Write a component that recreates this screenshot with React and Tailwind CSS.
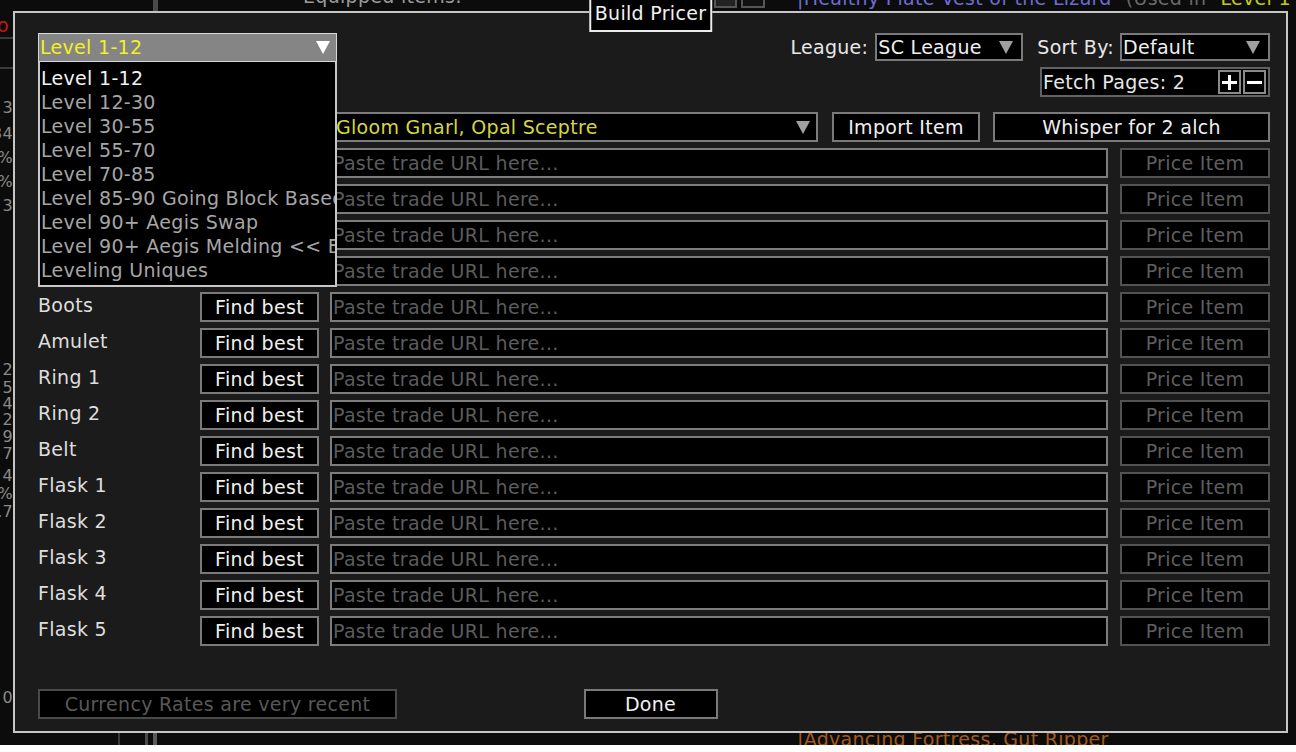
import React from "react";

const SLOTS = [
  "Weapon 1",
  "Weapon 2",
  "Helmet",
  "Body Armour",
  "Gloves",
  "Boots",
  "Amulet",
  "Ring 1",
  "Ring 2",
  "Belt",
  "Flask 1",
  "Flask 2",
  "Flask 3",
  "Flask 4",
  "Flask 5",
];

const LEVELS = [
  "Level 1-12",
  "Level 12-30",
  "Level 30-55",
  "Level 55-70",
  "Level 70-85",
  "Level 85-90 Going Block Based",
  "Level 90+ Aegis Swap",
  "Level 90+ Aegis Melding << EX",
  "Leveling Uniques",
];

// bits of the main window peeking out from behind the dialog
const EDGE_NUMBERS = [
  { y: 100, t: "3" },
  { y: 126, t: "34" },
  { y: 150, t: "3%" },
  { y: 174, t: "%" },
  { y: 198, t: "3" },
  { y: 362, t: "2" },
  { y: 380, t: "5" },
  { y: 396, t: "4" },
  { y: 412, t: "2" },
  { y: 429, t: "9" },
  { y: 446, t: "7" },
  { y: 468, t: "4" },
  { y: 486, t: "%" },
  { y: 504, t: ".7" },
  { y: 690, t: "0" },
];

function Arrow({ color = "#a0a0a0" }) {
  return (
    <svg width="14" height="13" viewBox="0 0 14 13" className="shrink-0">
      <polygon points="0,0 14,0 7,13" fill={color} />
    </svg>
  );
}

function Button({ children, className = "", dim = false }) {
  return (
    <div
      className={`flex h-[30px] shrink-0 items-center justify-center border-2 bg-black leading-none ${
        dim ? "border-[#525252] text-[#5e5e5e]" : "border-[#7a7a7a] text-[#f0f0f0]"
      } ${className}`}
    >
      {children}
    </div>
  );
}

function UrlInput() {
  return (
    <div className="ml-[11px] flex h-[30px] w-[778px] shrink-0 items-center border-2 border-[#7c7c7c] bg-black pl-[1px] leading-none text-[#5c5c5c]">
      Paste trade URL here...
    </div>
  );
}

function SlotRow({ name, first }) {
  return (
    <div className="flex h-[30px] items-center">
      <div className="w-[162px] shrink-0 -translate-y-[2px] leading-none text-[#dedede]">{name}</div>
      <Button className="w-[119px]">Find best</Button>
      {first ? (
        <>
          <div className="ml-[11px] flex h-[30px] w-[488px] shrink-0 items-center justify-between border-2 border-[#7c7c7c] bg-black pl-[4px] pr-[6px] leading-none text-[#d6d640]">
            <span>Gloom Gnarl, Opal Sceptre</span>
            <Arrow />
          </div>
          <Button className="ml-[14px] w-[148px]">Import Item</Button>
          <Button className="ml-[13px] w-[277px]">Whisper for 2 alch</Button>
        </>
      ) : (
        <>
          <UrlInput />
          <Button dim className="ml-[12px] w-[150px]">
            Price Item
          </Button>
        </>
      )}
    </div>
  );
}

function LevelSelect() {
  return (
    <div className="relative z-10 w-[299px]">
      <div className="flex h-[29px] items-center justify-between border border-[#d8d8d8] bg-[#858585] pl-[1px] pr-[6px] leading-none text-[#f2f21e]">
        <span>Level 1-12</span>
        <Arrow color="#ffffff" />
      </div>
      <div className="absolute left-0 top-[29px] w-[299px] border-2 border-t-0 border-[#c8c8c8] bg-black pb-[3px] pt-[4px]">
        {LEVELS.map((lvl, i) => (
          <div
            key={lvl}
            className={`flex h-[24px] items-center overflow-hidden whitespace-nowrap pl-[1px] leading-none ${
              i === 0 ? "text-[#f2f2f2]" : "text-[#a6a6a6]"
            }`}
          >
            {lvl}
          </div>
        ))}
      </div>
    </div>
  );
}

function Dropdown({ value, width }) {
  return (
    <div
      className={`flex h-[28px] items-center justify-between border-2 border-[#7a7a7a] bg-black pl-[1px] pr-[8px] leading-none text-[#f0f0f0] ${width}`}
    >
      <span>{value}</span>
      <Arrow />
    </div>
  );
}

function BehindWindow() {
  return (
    <div className="absolute inset-0 overflow-hidden text-[19px] leading-none">
      {/* top strip */}
      <div className="absolute left-[153px] top-0 h-[11px] w-[5px] bg-[#4a4a4a]" />
      <div className="absolute left-[303px] top-[-13px] text-[#9a9a9a]">Equipped items:</div>
      <div className="absolute left-[714px] top-[-2px] h-[10px] w-[23px] border-2 border-[#555] bg-[#222]" />
      <div className="absolute left-[741px] top-[-2px] h-[10px] w-[24px] border-2 border-[#555] bg-[#111]" />
      <div className="absolute left-[797px] top-[-11px] flex gap-[14px] whitespace-nowrap">
        <span className="text-[#6c6cd0]">|Healthy Plate Vest of the Lizard</span>
        <span className="text-[#6a6a6a]">(Used in</span>
        <span className="text-[#c8c818]">Level 1-1...</span>
      </div>
      {/* left edge */}
      <div className="absolute left-[-18px] top-[16px] text-[#c01818]">Go to</div>
      <div className="absolute left-0 top-[37px] h-[2px] w-[13px] bg-[#3a3a3a]" />
      <div className="absolute left-0 top-[67px] h-[2px] w-[13px] bg-[#3a3a3a]" />
      {EDGE_NUMBERS.map((n) => (
        <div
          key={n.y}
          className="absolute right-[1283px] text-[16px] text-[#8a8a8a]"
          style={{ top: n.y }}
        >
          {n.t}
        </div>
      ))}
      {/* bottom strip */}
      <div className="absolute left-[118px] top-[733px] h-[12px] w-[2px] bg-[#3a3a3a]" />
      <div className="absolute left-[145px] top-[733px] h-[12px] w-[3px] bg-[#4a4a4a]" />
      <div className="absolute left-[153px] top-[733px] h-[12px] w-[4px] bg-[#5a5a5a]" />
      <div className="absolute left-[797px] top-[730px] whitespace-nowrap text-[#a45a1c]">
        |Advancing Fortress, Gut Ripper
      </div>
    </div>
  );
}

export default function App() {
  return (
    <div className="h-[752px] w-[1296px] bg-white font-['DejaVu_Sans',sans-serif] text-[19px] tracking-[0.3px]">
      <div className="relative h-[745px] w-[1296px] overflow-hidden bg-[#0c0c0c]">
        <BehindWindow />

        {/* Build Pricer dialog */}
        <div className="absolute left-[13px] top-[11px] flex h-[722px] w-[1275px] flex-col border-2 border-[#c6c6c6] bg-[#1b1b1b]">
          <div className="absolute left-1/2 top-[-15px] flex h-[34px] -translate-x-1/2 items-end border-2 border-[#ececec] bg-black px-[4px] pb-[7px] leading-none text-[#f2f2f2]">
            Build Pricer
          </div>

          <div className="flex flex-col pl-[23px] pr-[16px] pt-[20px]">
            <div className="flex h-[63px] items-start justify-between">
              <LevelSelect />
              <div className="flex flex-col items-end gap-[6px]">
                <div className="flex h-[28px] items-center text-[#e8e8e8]">
                  <span className="mr-[7px] leading-none">League:</span>
                  <Dropdown value="SC League" width="w-[148px]" />
                  <span className="ml-[14px] mr-[6px] leading-none">Sort By:</span>
                  <Dropdown value="Default" width="w-[150px]" />
                </div>
                <div className="flex h-[30px] w-[230px] items-center justify-between border-2 border-[#626262] bg-black pl-[1px] pr-[2px] leading-none text-[#e8e8e8]">
                  <span>Fetch Pages: 2</span>
                  <div className="flex gap-[2px]">
                    <div className="flex h-[24px] w-[23px] items-center justify-center border-2 border-[#8a8a8a] bg-black">
                      <svg width="15" height="15" viewBox="0 0 15 15">
                        <rect x="6" y="0" width="3" height="15" fill="#ffffff" />
                        <rect x="0" y="6" width="15" height="3" fill="#ffffff" />
                      </svg>
                    </div>
                    <div className="flex h-[24px] w-[23px] items-center justify-center border-2 border-[#8a8a8a] bg-black">
                      <svg width="15" height="15" viewBox="0 0 15 15">
                        <rect x="0" y="6" width="15" height="3" fill="#ffffff" />
                      </svg>
                    </div>
                  </div>
                </div>
              </div>
            </div>

            <div className="mt-[16px] flex flex-col gap-[6px]">
              {SLOTS.map((slot, i) => (
                <SlotRow key={slot} name={slot} first={i === 0} />
              ))}
            </div>
          </div>

          <div className="mt-auto grid grid-cols-[1fr_auto_1fr] items-center px-[23px] pb-[12px]">
            <div className="flex h-[30px] w-[359px] items-center justify-center border-2 border-[#4a4a4a] bg-black leading-none text-[#585858]">
              Currency Rates are very recent
            </div>
            <Button className="w-[134px]">Done</Button>
            <div />
          </div>
        </div>
      </div>
    </div>
  );
}
